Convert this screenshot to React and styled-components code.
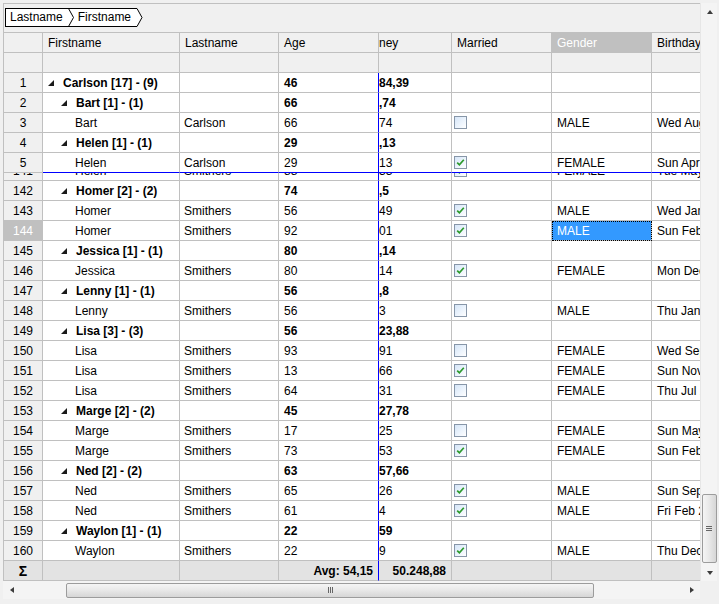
import React from "react";
import styled, { createGlobalStyle } from "styled-components";

const GlobalStyle = createGlobalStyle`
  html, body {
    margin: 0;
    padding: 0;
    background: #f0f0f0;
  }
  body {
    font-family: "Liberation Sans", "Noto Sans", sans-serif;
    font-size: 12px;
    color: #000;
  }
`;

const LINE = "#c0c0c0";
const BLUE = "#0000ff";

const W = {
  head: 39,
  first: 137,
  last: 99,
  age: 100,
  money: 73,
  married: 100,
  gender: 100,
  birthday: 100,
};

const topRows = [
  { n: 1, group: 1, label: "Carlson [17] - (9)", age: "46", money: "84,39" },
  { n: 2, group: 2, label: "Bart [1] - (1)", age: "66", money: ",74" },
  { n: 3, first: "Bart", last: "Carlson", age: "66", money: "74", married: false, gender: "MALE", bday: "Wed Aug 12 1949" },
  { n: 4, group: 2, label: "Helen [1] - (1)", age: "29", money: ",13" },
  { n: 5, first: "Helen", last: "Carlson", age: "29", money: "13", married: true, gender: "FEMALE", bday: "Sun Apr 05 1987", split: true },
];

const peekRow = { n: 141, first: "Helen", last: "Smithers", age: "88", money: "33", married: true, gender: "FEMALE", bday: "Tue May 19 1928" };

const bottomRows = [
  { n: 142, group: 2, label: "Homer [2] - (2)", age: "74", money: ",5" },
  { n: 143, first: "Homer", last: "Smithers", age: "56", money: "49", married: true, gender: "MALE", bday: "Wed Jan 14 1959" },
  { n: 144, first: "Homer", last: "Smithers", age: "92", money: "01", married: true, gender: "MALE", bday: "Sun Feb 27 1921", selected: true },
  { n: 145, group: 2, label: "Jessica [1] - (1)", age: "80", money: ",14" },
  { n: 146, first: "Jessica", last: "Smithers", age: "80", money: "14", married: true, gender: "FEMALE", bday: "Mon Dec 05 1932" },
  { n: 147, group: 2, label: "Lenny [1] - (1)", age: "56", money: ",8" },
  { n: 148, first: "Lenny", last: "Smithers", age: "56", money: "3", married: false, gender: "MALE", bday: "Thu Jan 17 1957" },
  { n: 149, group: 2, label: "Lisa [3] - (3)", age: "56", money: "23,88" },
  { n: 150, first: "Lisa", last: "Smithers", age: "93", money: "91", married: false, gender: "FEMALE", bday: "Wed Sep 16 1920" },
  { n: 151, first: "Lisa", last: "Smithers", age: "13", money: "66", married: true, gender: "FEMALE", bday: "Sun Nov 08 2000" },
  { n: 152, first: "Lisa", last: "Smithers", age: "64", money: "31", married: false, gender: "FEMALE", bday: "Thu Jul 24 1949" },
  { n: 153, group: 2, label: "Marge [2] - (2)", age: "45", money: "27,78" },
  { n: 154, first: "Marge", last: "Smithers", age: "17", money: "25", married: false, gender: "FEMALE", bday: "Sun May 04 1996" },
  { n: 155, first: "Marge", last: "Smithers", age: "73", money: "53", married: true, gender: "FEMALE", bday: "Sun Feb 16 1941" },
  { n: 156, group: 2, label: "Ned [2] - (2)", age: "63", money: "57,66" },
  { n: 157, first: "Ned", last: "Smithers", age: "65", money: "26", married: true, gender: "MALE", bday: "Sun Sep 12 1948" },
  { n: 158, first: "Ned", last: "Smithers", age: "61", money: "4", married: true, gender: "MALE", bday: "Fri Feb 22 1952" },
  { n: 159, group: 2, label: "Waylon [1] - (1)", age: "22", money: "59" },
  { n: 160, first: "Waylon", last: "Smithers", age: "22", money: "9", married: true, gender: "MALE", bday: "Thu Dec 23 1991" },
];

const Expander = () => (
  <Tri width="6" height="6" viewBox="0 0 6 6">
    <polygon points="6,0 6,6 0,6" fill="#1a1a1a" />
  </Tri>
);

const Check = ({ on }) => (
  <Box>
    {on && (
      <svg width="11" height="11" viewBox="0 0 11 11">
        <path d="M2.2 5.6 L4.4 7.8 L8.8 2.8" fill="none" stroke="#2c9a2c" strokeWidth="1.7" />
      </svg>
    )}
  </Box>
);

const DataRow = ({ r }) => {
  const isGroup = !!r.group;
  return (
    <Row>
      <RowHead $w={W.head} $selected={r.selected}>{r.n}</RowHead>
      <Cell $w={W.first} $pl={isGroup ? (r.group === 1 ? 5 : 18) : 32} $bold={isGroup} $blueBottom={r.split}>
        {isGroup && <Expander />}
        {isGroup ? r.label : r.first}
      </Cell>
      <Cell $w={W.last} $pl={4} $blueBottom={r.split}>{r.last}</Cell>
      <Cell $w={W.age} $bold={isGroup} $blueRight $blueBottom={r.split}>{r.age}</Cell>
      <Cell $w={W.money} $pl={0} $bold={isGroup} $blueBottom={r.split}>{r.money}</Cell>
      <Cell $w={W.married} $pl={2} $blueBottom={r.split}>
        {!isGroup && <Check on={r.married} />}
      </Cell>
      <Cell $w={W.gender} $blueBottom={r.split} $focused={r.selected}>{r.gender}</Cell>
      <Cell $w={W.birthday} $blueBottom={r.split}>{r.bday}</Cell>
    </Row>
  );
};

const Arrow = ({ dir }) => {
  const pts = {
    up: "0,4 3,0 6,4",
    down: "0,0 3,4 6,0",
    left: "4,0 0,3 4,6",
    right: "0,0 4,3 0,6",
  }[dir];
  const vertical = dir === "up" || dir === "down";
  return (
    <svg width={vertical ? 6 : 4} height={vertical ? 4 : 6} viewBox={vertical ? "0 0 6 4" : "0 0 4 6"}>
      <polygon points={pts} fill="#3c3c3c" />
    </svg>
  );
};

export default function App() {
  return (
    <>
      <GlobalStyle />
      <Page>
        <Control>
          <GridPane>
            <GroupBar>
              <Crumbs>
                <CrumbLabel $first>Lastname</CrumbLabel>
                <svg width="6" height="19" viewBox="0 0 6 19">
                  <rect x="0" y="0" width="6" height="19" fill="#fff" />
                  <line x1="0" y1="0.5" x2="6" y2="0.5" stroke="#000" />
                  <line x1="0" y1="18.5" x2="6" y2="18.5" stroke="#000" />
                  <polyline points="0.5,0.5 5.5,9.5 0.5,18.5" fill="none" stroke="#000" />
                </svg>
                <CrumbLabel>Firstname</CrumbLabel>
                <svg width="7" height="19" viewBox="0 0 7 19">
                  <polygon points="0,0 1,0 6,9.5 1,19 0,19" fill="#fff" />
                  <polyline points="0,0.5 1,0.5 6,9.5 1,18.5 0,18.5" fill="none" stroke="#000" />
                </svg>
              </Crumbs>
            </GroupBar>

            <Row $header>
              <HeadCell $w={W.head} />
              <HeadCell $w={W.first}>Firstname</HeadCell>
              <HeadCell $w={W.last}>Lastname</HeadCell>
              <HeadCell $w={W.age}>Age</HeadCell>
              <HeadCell $w={W.money} $pl={0}>ney</HeadCell>
              <HeadCell $w={W.married}>Married</HeadCell>
              <HeadCell $w={W.gender} $active>Gender</HeadCell>
              <HeadCell $w={W.birthday}>Birthday</HeadCell>
            </Row>
            <Row>
              <HeadCell $w={W.head} />
              <HeadCell $w={W.first} />
              <HeadCell $w={W.last} />
              <HeadCell $w={W.age} />
              <HeadCell $w={W.money} />
              <HeadCell $w={W.married} />
              <HeadCell $w={W.gender} />
              <HeadCell $w={W.birthday} />
            </Row>

            {topRows.map((r) => (
              <DataRow key={r.n} r={r} />
            ))}
            <Peek>
              <DataRow r={peekRow} />
            </Peek>
            {bottomRows.map((r) => (
              <DataRow key={r.n} r={r} />
            ))}

            <Row>
              <RowHead $w={W.head} $summary $bold>Σ</RowHead>
              <Cell $w={W.first} $summary />
              <Cell $w={W.last} $summary />
              <Cell $w={W.age} $summary $bold $align="right" $blueRight>Avg: 54,15</Cell>
              <Cell $w={W.money} $summary $bold $align="right">50.248,88</Cell>
              <Cell $w={W.married} $summary />
              <Cell $w={W.gender} $summary />
              <Cell $w={W.birthday} $summary />
            </Row>
          </GridPane>

          <VScroll>
            <ArrowBtn $v>
              <Arrow dir="up" />
            </ArrowBtn>
            <VTrack>
              <VThumb style={{ marginTop: 474 }}>
                <GripV />
              </VThumb>
            </VTrack>
            <ArrowBtn $v>
              <Arrow dir="down" />
            </ArrowBtn>
          </VScroll>

          <HScroll>
            <ArrowBtn>
              <Arrow dir="left" />
            </ArrowBtn>
            <HTrack>
              <HThumb style={{ marginLeft: 46, width: 528 }}>
                <GripH />
              </HThumb>
            </HTrack>
            <ArrowBtn>
              <Arrow dir="right" />
            </ArrowBtn>
          </HScroll>
          <Corner />
        </Control>
      </Page>
    </>
  );
}

const Page = styled.div`
  width: 719px;
  height: 604px;
  box-sizing: border-box;
  padding: 3px 0 0 3px;
  overflow: hidden;
`;

const Control = styled.div`
  display: grid;
  grid-template-columns: 697px 17px;
  grid-template-rows: 578px 18px;
`;

const GridPane = styled.div`
  display: flex;
  flex-direction: column;
  border-top: 1px solid ${LINE};
  border-left: 1px solid ${LINE};
  overflow: hidden;
  background: #f0f0f0;
`;

const GroupBar = styled.div`
  flex: none;
  height: 28px;
  box-sizing: border-box;
  padding: 4px 0 0 1px;
  display: flex;
  align-items: flex-start;
`;

const Crumbs = styled.div`
  display: flex;
  height: 19px;
`;

const CrumbLabel = styled.span`
  box-sizing: border-box;
  height: 19px;
  line-height: 17px;
  background: #fff;
  border-top: 1px solid #000;
  border-bottom: 1px solid #000;
  border-left: ${(p) => (p.$first ? "1px solid #000" : "none")};
  padding: ${(p) => (p.$first ? "0 5px 0 4px" : "0 5px 0 4px")};
`;

const Row = styled.div`
  flex: none;
  display: flex;
  box-sizing: border-box;
  height: ${(p) => (p.$header ? 21 : 20)}px;
  border-top: ${(p) => (p.$header ? `1px solid ${LINE}` : "none")};
`;

const Cell = styled.div`
  flex: none;
  box-sizing: border-box;
  width: ${(p) => p.$w}px;
  height: 100%;
  display: flex;
  align-items: center;
  justify-content: ${(p) => (p.$align === "right" ? "flex-end" : p.$align === "center" ? "center" : "flex-start")};
  padding: 0 5px 0 ${(p) => (p.$pl ?? 5)}px;
  border-right: 1px solid ${(p) => (p.$blueRight ? BLUE : LINE)};
  border-bottom: 1px solid ${(p) => (p.$blueBottom ? BLUE : LINE)};
  background: ${(p) => (p.$focused ? "#3399ff" : p.$summary ? "#e3e3e3" : "#fff")};
  color: ${(p) => (p.$focused ? "#fff" : "#000")};
  outline: ${(p) => (p.$focused ? "1px dotted #000" : "none")};
  outline-offset: -1px;
  font-weight: ${(p) => (p.$bold ? 700 : 400)};
  white-space: nowrap;
  overflow: hidden;
`;

const RowHead = styled(Cell)`
  justify-content: center;
  padding: 0;
  border-bottom-color: ${LINE};
  background: ${(p) => (p.$selected ? "#c0c0c0" : p.$summary ? "#e3e3e3" : "#f0f0f0")};
  color: ${(p) => (p.$selected ? "#fff" : "#000")};
  font-size: ${(p) => (p.$summary ? 14 : 12)}px;
`;

const HeadCell = styled(Cell)`
  background: ${(p) => (p.$active ? "#c0c0c0" : "#f0f0f0")};
  color: ${(p) => (p.$active ? "#fff" : "#000")};
`;

const Peek = styled.div`
  flex: none;
  height: 8px;
  overflow: hidden;
  & > div {
    margin-top: -12px;
  }
`;

const Tri = styled.svg`
  flex: none;
  margin: 1px 9px 0 0;
`;

const Box = styled.span`
  box-sizing: border-box;
  width: 13px;
  height: 13px;
  display: flex;
  align-items: center;
  justify-content: center;
  border: 1px solid #8796a8;
  background: linear-gradient(135deg, #d6e6f8 0%, #eef5fd 60%, #ffffff 100%);
`;

const VScroll = styled.div`
  grid-row: 1;
  grid-column: 2;
  display: flex;
  flex-direction: column;
  background: #f4f4f4;
  border-left: 1px solid #e6e6e6;
`;

const ArrowBtn = styled.div`
  flex: none;
  width: 17px;
  height: ${(p) => (p.$v ? 17 : 18)}px;
  display: flex;
  align-items: center;
  justify-content: center;
`;

const VTrack = styled.div`
  flex: 1;
  display: flex;
  flex-direction: column;
  align-items: center;
`;

const thumbBase = `
  box-sizing: border-box;
  border: 1px solid #9c9c9c;
  border-radius: 2px;
  display: flex;
  align-items: center;
  justify-content: center;
`;

const VThumb = styled.div`
  ${thumbBase}
  width: 15px;
  height: 69px;
  background: linear-gradient(to right, #f5f5f5, #e9e9e9 45%, #d6d6d6);
`;

const GripV = styled.div`
  width: 6px;
  height: 5px;
  border-top: 1px solid #666;
  border-bottom: 1px solid #666;
  box-sizing: border-box;
  background: linear-gradient(#666, #666) center / 100% 1px no-repeat;
`;

const HScroll = styled.div`
  grid-row: 2;
  grid-column: 1;
  display: flex;
  align-items: center;
  background: #f4f4f4;
`;

const HTrack = styled.div`
  flex: 1;
  height: 100%;
  display: flex;
  align-items: center;
`;

const HThumb = styled.div`
  ${thumbBase}
  height: 15px;
  background: linear-gradient(#f5f5f5, #e9e9e9 45%, #d6d6d6);
`;

const GripH = styled.div`
  width: 5px;
  height: 6px;
  border-left: 1px solid #666;
  border-right: 1px solid #666;
  box-sizing: border-box;
  background: linear-gradient(#666, #666) center / 1px 100% no-repeat;
`;

const Corner = styled.div`
  grid-row: 2;
  grid-column: 2;
  background: #f0f0f0;
`;
